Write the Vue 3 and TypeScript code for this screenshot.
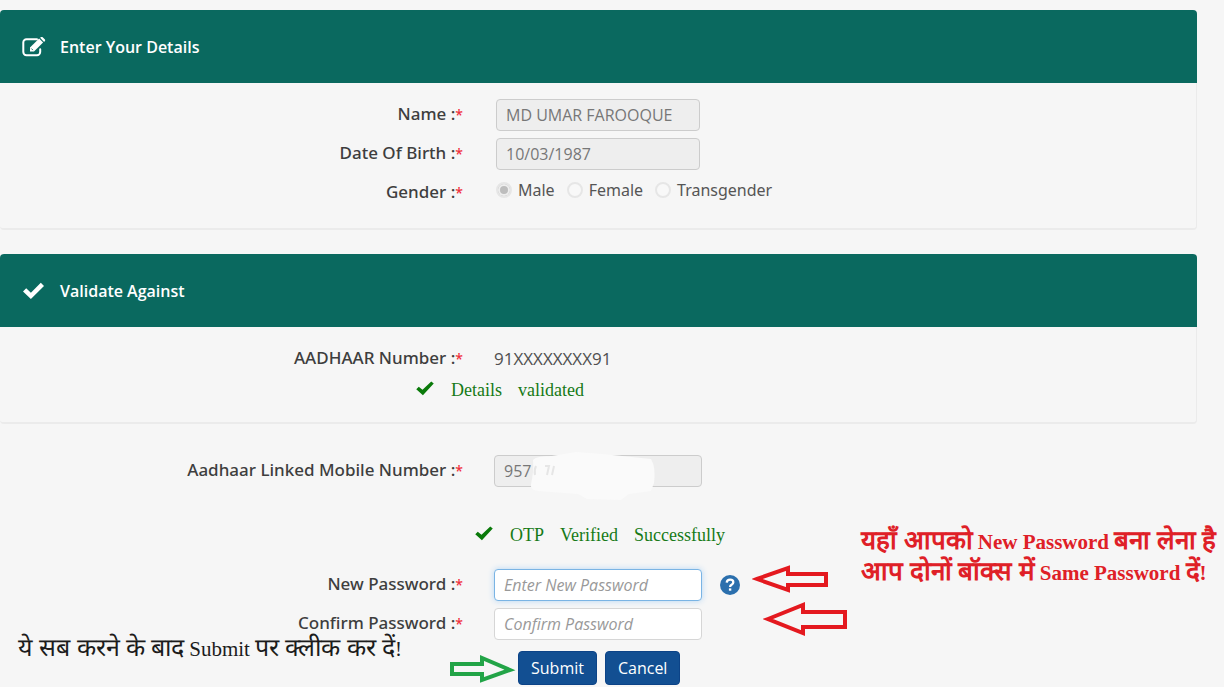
<script setup lang="ts">
import { ref } from 'vue'

const fullName = ref('MD UMAR FAROOQUE')
const birthDate = ref('10/03/1987')
const gender = ref('Male')
const genders = ['Male', 'Female', 'Transgender']
const mobile = ref('957')
const newPassword = ref('')
const confirmPassword = ref('')
const detailsStatus = ['Details', 'validated']
const otpStatus = ['OTP', 'Verified', 'Successfully']
</script>

<template>
  <form class="page" @submit.prevent>
    <section class="panel">
      <header class="panel-head">
        <svg class="head-icon" viewBox="0 0 24 20" aria-hidden="true">
          <path d="M15.500 2.200H5A3.200 3.200 0 0 0 1.800 5.400V15A3.200 3.200 0 0 0 5 18.200h10.500a3.200 3.200 0 0 0 3.200-3.200v-2.800" fill="none" stroke="#fff" stroke-width="2" stroke-linecap="round" />
          <path d="M8.500 10.500 17.600 1.400l4 4-9.100 9.100h-4z" fill="#fff" />
          <path d="m18.600.800.600-.500a1.400 1.400 0 0 1 2 0l2 2a1.400 1.400 0 0 1 0 2l-.600.600z" fill="#fff" />
          <path d="m9.800 11.500 1.600 1.600" stroke="#0a695f" stroke-width=".9" />
        </svg>
        <h2>Enter Your Details</h2>
      </header>
      <div class="panel-body details">
        <div class="row">
          <label class="caption" for="name">Name :<span class="star">*</span></label>
          <div class="field"><input id="name" v-model="fullName" class="box short" type="text" disabled /></div>
        </div>
        <div class="row">
          <label class="caption" for="dob">Date Of Birth :<span class="star">*</span></label>
          <div class="field"><input id="dob" v-model="birthDate" class="box short" type="text" disabled /></div>
        </div>
        <div class="row">
          <span id="gender-caption" class="caption">Gender :<span class="star">*</span></span>
          <div class="field radios" role="radiogroup" aria-labelledby="gender-caption">
            <label v-for="g in genders" :key="g" class="choice">
              <input v-model="gender" type="radio" name="gender" :value="g" disabled />{{ g }}
            </label>
          </div>
        </div>
      </div>
    </section>

    <section class="panel second">
      <header class="panel-head">
        <svg class="head-icon check" viewBox="0 0 24 20" aria-hidden="true">
          <path d="m1.500 10.500 3.200-3.200 4.700 4.500L19.300 1.800 22.500 5 9.400 18z" fill="#fff" />
        </svg>
        <h2>Validate Against</h2>
      </header>
      <div class="panel-body validate">
        <div class="row">
          <span class="caption">AADHAAR Number :<span class="star">*</span></span>
          <div class="field value">91XXXXXXXX91</div>
        </div>
        <p class="status status-details">
          <svg class="tick" viewBox="0 0 24 20" aria-hidden="true">
            <path d="m1.500 11 3-3 4.500 3.500L19.500 1.500 22.500 4 9.500 18z" fill="#0a7a0a" />
          </svg>
          <span v-for="word in detailsStatus" :key="word">{{ word }}</span>
        </p>
      </div>
    </section>

    <div class="credentials">
      <div class="row">
        <label class="caption" for="mobile">Aadhaar Linked Mobile Number :<span class="star">*</span></label>
        <div class="field masked">
          <input id="mobile" v-model="mobile" class="box" type="text" disabled />
          <svg class="smudge" viewBox="0 0 132 50" aria-hidden="true">
            <path d="M5 9Q8 5 24 5L48 1l26 2 20 2 29 3q5 8 3 24l-3 8-22 3-8 6-34-1-9-5-40-3Q2 39 3 33 6 20 5 9z" fill="#fafafa" />
            <path d="M8 15q-2 4-1 9M17 15h4l-2 9M26 15l-2 9" fill="none" stroke="#e6e6e6" stroke-width="2" />
          </svg>
        </div>
      </div>
      <p class="status status-otp">
        <svg class="tick" viewBox="0 0 24 20" aria-hidden="true">
          <path d="m1.500 11 3-3 4.500 3.500L19.500 1.500 22.500 4 9.500 18z" fill="#0a7a0a" />
        </svg>
        <span v-for="word in otpStatus" :key="word">{{ word }}</span>
      </p>
      <div class="row">
        <label class="caption" for="new-password">New Password :<span class="star">*</span></label>
        <div class="field">
          <input id="new-password" v-model="newPassword" class="box active" type="password" placeholder="Enter New Password" />
          <button class="help" type="button" aria-label="Password help">
            <svg viewBox="0 0 20 20" aria-hidden="true">
              <circle cx="10" cy="10" r="10" fill="#2b6fad" />
              <path d="M6.700 7.600Q7 4.700 10.100 4.700q3.200 0 3.200 2.600 0 1.600-1.700 2.500-1.500.8-1.500 2.200" fill="none" stroke="#fff" stroke-width="2.300" />
              <path d="M8.900 13.400h2.400v2.300H8.900z" fill="#fff" />
            </svg>
          </button>
        </div>
      </div>
      <div class="row">
        <label class="caption" for="confirm-password">Confirm Password :<span class="star">*</span></label>
        <div class="field">
          <input id="confirm-password" v-model="confirmPassword" class="box" type="password" placeholder="Confirm Password" />
        </div>
      </div>
      <div class="actions">
        <button class="action" type="submit">Submit</button>
        <button class="action" type="button">Cancel</button>
      </div>

      <svg class="arrow arrow-new" viewBox="0 0 78 28" aria-hidden="true">
        <path d="M5 14 36 3v6h38v11H36v5z" fill="none" stroke="#e4191f" stroke-width="4" />
      </svg>
      <svg class="arrow arrow-confirm" viewBox="0 0 86 36" aria-hidden="true">
        <path d="M5 18 40 4v7h42v15H40v6z" fill="none" stroke="#e4191f" stroke-width="4" />
      </svg>
      <svg class="arrow arrow-submit" viewBox="0 0 66 30" aria-hidden="true">
        <path d="M2 10h30V4l28 12-28 10v-6H2z" fill="none" stroke="#22a447" stroke-width="4" />
      </svg>
      <p class="note note-password"><span class="hindi">यहाँ आपको</span> New Password <span class="hindi">बना लेना है</span><br /><span class="hindi">आप दोनों बॉक्स में</span> Same Password <span class="hindi">दें</span>!</p>
      <p class="note note-submit"><span class="hindi">ये सब करने के बाद</span> Submit <span class="hindi">पर क्लीक कर दें</span>!</p>
    </div>
  </form>
</template>

<style>
body {
  background: #f6f6f6;
}
</style>

<style scoped>
.page {
  padding-top: 10px;
  font-family: "Open Sans", "Noto Sans", sans-serif;
  font-size: 17px;
  color: #3e3e3e;
  overflow-x: hidden;
}
.page * {
  box-sizing: border-box;
}
.panel {
  margin-right: 27px;
  border-bottom: 2px solid #ebebeb;
  border-right: 1px solid #ebebeb;
  border-radius: 4px;
}
.second {
  margin-top: 24px;
}
.panel-head {
  display: flex;
  align-items: center;
  gap: 14px;
  height: 73px;
  padding-left: 21px;
  margin-right: -1px;
  background: #0a695f;
  border-radius: 4px 4px 0 0;
}
.panel-head h2 {
  margin: 0;
  font-size: 16px;
  line-height: 24px;
  font-weight: 600;
  color: #fff;
}
.head-icon {
  width: 25px;
  height: 20px;
}
.details {
  padding: 12px 0 16px;
}
.validate {
  padding: 12px 0 20px;
}
.row {
  display: grid;
  grid-template-columns: minmax(0, 463px) 1fr;
  column-gap: 31px;
  align-items: center;
  min-height: 39px;
}
.details .row {
  column-gap: 33px;
}
.caption {
  text-align: right;
  font-family: "Noto Sans", "Open Sans", sans-serif;
  font-weight: 500;
  line-height: 24px;
}
.star {
  color: #f0303c;
  font-size: 14px;
}
.field {
  display: flex;
  align-items: center;
}
.box {
  width: 208px;
  height: 32px;
  padding: 0 9px;
  border: 1px solid #d6d6d6;
  border-radius: 4px;
  background: #fff;
  font: 16px "Open Sans", "Noto Sans", sans-serif;
  color: #555;
  outline: none;
}
.box.short {
  width: 204px;
}
.box:disabled {
  background: #eee;
  border-color: #ccc;
  color: #777;
}
.box::placeholder {
  font-style: italic;
  color: #999;
  opacity: 1;
}
.box.active {
  border-color: #7ab4e4;
  box-shadow: 0 0 6px #b5d6f4;
}
.radios {
  gap: 12px;
  padding-bottom: 6px;
}
.choice {
  display: flex;
  align-items: center;
  gap: 6px;
  font-family: "Noto Sans", "Open Sans", sans-serif;
  font-size: 16px;
  line-height: 24px;
  color: #555;
}
.choice input {
  appearance: none;
  width: 16px;
  height: 16px;
  margin: 0;
  border: 2px solid #e6e6e6;
  border-radius: 50%;
  background: #f8f8f8;
}
.choice input:checked {
  background: #bdbdbd;
  box-shadow: inset 0 0 0 2px #eee;
}
.value {
  color: #505050;
}
.status {
  display: flex;
  align-items: center;
  gap: 16px;
  margin: 0;
  font: 18px/24px "Liberation Serif", serif;
  color: #177a17;
}
.tick {
  width: 20px;
  height: 17px;
  margin-bottom: 4px;
}
.status-details {
  padding-left: 415px;
}
.status-otp {
  margin: 33px 0 18px;
  padding-left: 474px;
}
.credentials {
  position: relative;
  padding-top: 27px;
}
.masked {
  position: relative;
}
.smudge {
  position: absolute;
  left: 34px;
  top: -4px;
  width: 132px;
  height: 50px;
}
.help {
  width: 20px;
  height: 20px;
  margin-left: 18px;
  padding: 0;
  border: 0;
  background: none;
}
.help svg {
  display: block;
}
.actions {
  display: flex;
  gap: 8px;
  margin-top: 8px;
  padding-left: 518px;
}
.action {
  height: 34px;
  padding: 0 12px;
  border: 1px solid #0c4387;
  border-radius: 4px;
  background: #124f92;
  font: 500 16px "Open Sans", "Noto Sans", sans-serif;
  color: #fff;
}
.arrow {
  position: absolute;
}
.arrow-new {
  left: 752px;
  top: 141px;
  width: 78px;
  height: 28px;
}
.arrow-confirm {
  left: 763px;
  top: 177px;
  width: 86px;
  height: 36px;
}
.arrow-submit {
  left: 450px;
  top: 230px;
  width: 66px;
  height: 30px;
}
.note {
  position: absolute;
  margin: 0;
  white-space: nowrap;
  font-family: "Liberation Serif", serif;
  font-size: 21px;
  line-height: 31px;
}
.hindi {
  font-size: 26px;
  line-height: 24px;
}
.note-password {
  left: 861px;
  top: 103px;
  font-weight: 700;
  color: #df2027;
}
.note-submit {
  left: 18px;
  top: 210px;
  color: #1c1c1c;
}
.note-submit .hindi {
  font-size: 25px;
}
</style>
